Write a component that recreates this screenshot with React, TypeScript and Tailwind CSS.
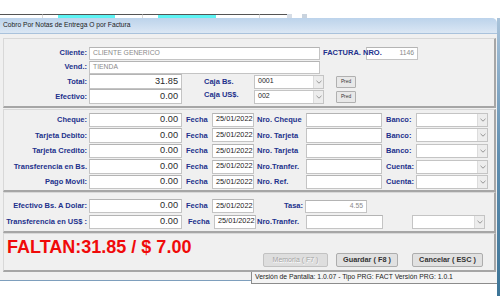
import React from 'react'

const lbl = "font-bold text-[7.5px] text-[#22308c] whitespace-nowrap leading-none"

function Box({ w, h = "h-[14px]", value = "", right = false, gray = false, big = false }: { w: string, h?: string, value?: string, right?: boolean, gray?: boolean, big?: boolean }) {
  return (
    <div
      className={`${w} ${h} shrink-0 bg-white border border-[#c4c4c4] border-t-[#b4b4b4] flex items-center overflow-hidden ${right ? 'justify-end pr-[3px]' : 'pl-[3px]'} ${big ? 'text-[9.2px] text-[#2a2a2a]' : gray ? 'text-[6.8px] text-[#8a8a8a]' : 'text-[7.3px] text-[#222]'}`}
    >
      {value}
    </div>
  )
}

function Combo({ w, value = "" }: { w: string, value?: string }) {
  return (
    <div className={`${w} h-[14px] shrink-0 bg-white border border-[#c4c4c4] flex items-stretch`}>
      <div className="flex-1 pl-[3px] flex items-center text-[7px] text-[#222]">{value}</div>
      <div className="w-[10px] bg-[#ededed] border-l border-[#dcdcdc] flex items-center justify-center">
        <svg width="6" height="4" viewBox="0 0 6 4">
          <path d="M0.5 0.8 L3 3.2 L5.5 0.8" fill="none" stroke="#8c8c8c" strokeWidth="0.9" />
        </svg>
      </div>
    </div>
  )
}

function Pred() {
  return (
    <div className="ml-[12px] w-[20px] h-[12px] bg-[#e8e8e8] border border-[#b0b0b0] rounded-[1px] flex items-center justify-center text-[4.8px] text-[#333]">
      Pred
    </div>
  )
}

function Left({ text }: { text: string }) {
  return <div className={`w-[84px] shrink-0 flex justify-end pr-[1px] ${lbl}`}>{text}</div>
}

function Fecha({ date = "25/01/2022" }: { date?: string }) {
  return (
    <>
      <div className={`ml-[4px] w-[26px] shrink-0 ${lbl}`}>Fecha</div>
      <Box w="w-[42px]" value={date} />
    </>
  )
}

const group = "border-t border-l border-[#d8d8d8] border-r-2 border-b-2 border-r-[#a6a6a6] border-b-[#a6a6a6] overflow-hidden"

const pagos = [
  { l: "Cheque:", n: "Nro. Cheque", b: "Banco:" },
  { l: "Tarjeta Debito:", n: "Nro. Tarjeta", b: "Banco:" },
  { l: "Tarjeta Credito:", n: "Nro. Tarjeta", b: "Banco:" },
  { l: "Transferencia en Bs.", n: "Nro.Tranfer.", b: "Cuenta:" },
  { l: "Pago Movil:", n: "Nro. Ref.", b: "Cuenta:" },
]

export default function App() {
  return (
    <div className="w-[500px] h-[297px] bg-white overflow-hidden font-['Liberation_Sans',Arial,sans-serif]">
      <div className="h-[14px]" />
      <div className="flex h-[4px] w-[307px]">
        <div className="w-[43px] border-t border-[#555] border-r border-r-[#d8d8d8]" />
        <div className="w-[15px] border-t border-[#555]" />
        <div className="w-[57px] bg-[#5df3f3] border-t border-[#555]" />
        <div className="w-[28px] border-t border-[#555] border-r border-r-[#d8d8d8]" />
        <div className="w-[15px] border-t border-[#555]" />
        <div className="w-[58px] bg-[#5df3f3] border-t border-[#555]" />
        <div className="w-[44px] border-t border-[#555] border-r border-r-[#d8d8d8]" />
        <div className="w-[27px] border-t border-[#555]" />
        <div className="w-[5px] bg-[#d6dde6]" />
        <div className="w-[10px]" />
        <div className="w-[5px] bg-[#c9d3de]" />
      </div>

      <div className="flex">
        <div className="w-[497px] shrink-0">
          <div className="h-[16px] rounded-tr-[5px] bg-gradient-to-b from-[#bcd3eb] to-[#dbe7f4] border-b border-[#a9c2dc] pl-[3px] flex items-center text-[6.7px] text-[#1b1b1b]">
            Cobro Por Notas de Entrega O por Factura
          </div>

          <div className="bg-[#f0f0f0] h-[238px] pl-[3px] pr-[1px] pt-[4px]">
            {/* Cliente */}
            <div className={`${group} h-[70px] pt-[7px]`}>
              <div className="flex items-center h-[14px]">
                <Left text="Cliente:" />
                <div className="ml-[1px]"><Box w="w-[231px]" h="h-[13px]" value="CLIENTE GENERICO" gray /></div>
                <div className={`ml-[3px] w-[59px] shrink-0 relative z-10 ${lbl}`}>FACTURA. NRO.</div>
                <div className="-ml-[16px]"><Box w="w-[52px]" h="h-[13px]" value="1146" right gray /></div>
              </div>
              <div className="flex items-center h-[14px]">
                <Left text="Vend.:" />
                <div className="ml-[1px]"><Box w="w-[231px]" h="h-[13px]" value="TIENDA" gray /></div>
              </div>
              <div className="flex items-center h-[15px]">
                <Left text="Total:" />
                <div className="ml-[1px]"><Box w="w-[93px]" h="h-[14.5px]" value="31.85" right big /></div>
                <div className={`ml-[22px] w-[50px] shrink-0 ${lbl}`}>Caja Bs.</div>
                <Combo w="w-[70px]" value="0001" />
                <Pred />
              </div>
              <div className="flex items-center h-[15px]">
                <Left text="Efectivo:" />
                <div className="ml-[1px]"><Box w="w-[93px]" h="h-[14.5px]" value="0.00" right big /></div>
                <div className={`ml-[22px] w-[50px] shrink-0 ${lbl} -mt-[3px]`}>Caja US$.</div>
                <Combo w="w-[70px]" value="002" />
                <Pred />
              </div>
            </div>

            {/* Formas de pago */}
            <div className={`${group} h-[83px] mt-[1px] pt-[2px]`}>
              {pagos.map((p, i) => (
                <div key={i} className="flex items-center h-[15.6px]">
                  <Left text={p.l} />
                  <div className="ml-[1px]"><Box w="w-[93px]" h="h-[14.5px]" value="0.00" right big /></div>
                  <Fecha />
                  <div className={`ml-[3px] w-[49px] shrink-0 ${lbl}`}>{p.n}</div>
                  <Box w="w-[76px]" h="h-[14.5px]" />
                  <div className={`ml-[4px] w-[30px] shrink-0 ${lbl}`}>{p.b}</div>
                  <Combo w="w-[72px]" />
                </div>
              ))}
            </div>

            {/* Dolares */}
            <div className={`${group} h-[41px] pt-[5px]`}>
              <div className="flex items-center h-[16px]">
                <Left text="Efectivo Bs. A Dolar:" />
                <div className="ml-[1px]"><Box w="w-[93px]" h="h-[14.5px]" value="0.00" right big /></div>
                <Fecha />
                <div className={`w-[51px] shrink-0 flex justify-end pr-[2px] ${lbl}`}>Tasa:</div>
                <Box w="w-[62px]" h="h-[13px]" value="4.55" right gray />
              </div>
              <div className="flex items-center h-[15px]">
                <Left text="Transferencia en US$ :" />
                <div className="ml-[1px]"><Box w="w-[93px]" h="h-[14px]" value="0.00" right big /></div>
                <div className="ml-[2px] flex items-center"><Fecha /></div>
                <div className={`ml-[1px] w-[49px] shrink-0 ${lbl}`}>Nro.Tranfer.</div>
                <Box w="w-[77px]" h="h-[14px]" />
                <div className="ml-[29px]"><Combo w="w-[73px]" /></div>
              </div>
            </div>

            {/* Totales y botones */}
            <div className={`${group} h-[39px] pt-[4px] pl-[3px] flex items-start`}>
              <div className="w-[256px] shrink-0 text-[18px] leading-[18px] font-bold text-[#f00a0a] whitespace-nowrap">
                FALTAN:31.85 / $ 7.00
              </div>
              <div className="mt-[15px] flex">
                <div className="w-[65px] h-[14px] bg-[#dedede] border border-[#c2c2c2] rounded-[2px] flex items-center justify-center text-[7px] text-[#a3a3a3] [text-shadow:0.5px_0.5px_0_#fff]">
                  Memoria ( F7 )
                </div>
                <div className="ml-[8px] w-[62px] h-[14px] bg-[#e1e1e1] border border-[#adadad] rounded-[2px] flex items-center justify-center text-[7.3px] font-bold text-[#333]">
                  Guardar ( F8 )
                </div>
                <div className="ml-[14px] w-[71px] h-[14px] bg-[#e1e1e1] border border-[#adadad] rounded-[2px] flex items-center justify-center text-[7.3px] font-bold text-[#333]">
                  Cancelar ( ESC )
                </div>
              </div>
            </div>
          </div>

          <div className="flex h-[12px]">
            <div className="w-[251px] shrink-0 flex flex-col">
              <div className="h-[8px] bg-[#f0f0f0]" />
              <div className="h-[1px] bg-[#7e9fbd]" />
            </div>
            <div className="flex-1 border-l border-b border-[#8c8c8c] bg-[#f4f4f4] pl-[3px] flex items-center text-[6.8px] text-[#222] whitespace-nowrap">
              Versión de Pantalla: 1.0.07 - Tipo PRG: FACT Versión PRG: 1.0.1
            </div>
          </div>
        </div>
        <div className="w-[3px] h-[278px] bg-gradient-to-b from-[#a9c3da] via-[#5f8eb0] to-[#3d7597]" />
      </div>
    </div>
  )
}
